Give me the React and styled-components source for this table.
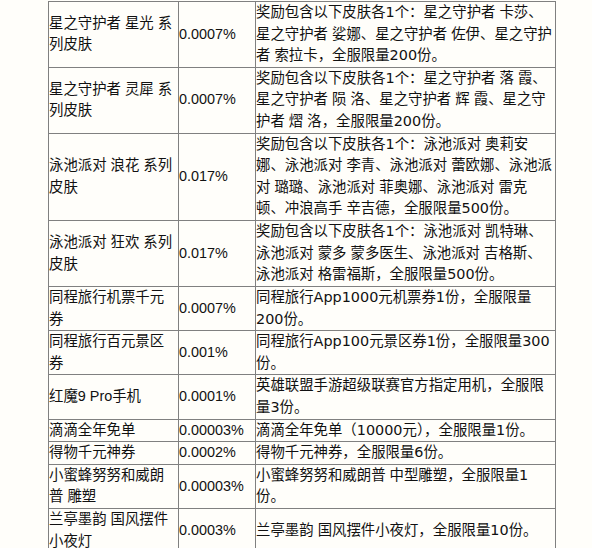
import React from "react";
import styled, { createGlobalStyle } from "styled-components";

const GlobalStyle = createGlobalStyle`
  html, body {
    margin: 0;
    padding: 0;
    background: #fffefa;
  }
  body {
    font-family: "Liberation Sans", "Noto Sans CJK SC", sans-serif;
    color: #111;
  }
`;

const Page = styled.div`
  padding: 1px 0 0 48px;
  width: 592px;
  height: 548px;
  box-sizing: border-box;
  overflow: hidden;
`;

const Table = styled.table`
  border-collapse: collapse;
  width: 504px;
  table-layout: fixed;
  font-size: 14.4px;
  line-height: 1.5;
`;

const Cell = styled.td`
  border: 1px solid #808080;
  padding: 0;
  vertical-align: middle;
  width: ${(p) => p.$w}px;
`;

const DescCell = styled(Cell)`
  font-family: "DejaVu Sans", "Noto Sans CJK SC", sans-serif;
  word-spacing: -0.5px;
`;

const rewards = [
  {
    name: "星之守护者 星光 系列皮肤",
    rate: "0.0007%",
    desc: "奖励包含以下皮肤各1个：星之守护者 卡莎、星之守护者 娑娜、星之守护者 佐伊、星之守护者 索拉卡，全服限量200份。",
  },
  {
    name: "星之守护者 灵犀 系列皮肤",
    rate: "0.0007%",
    desc: "奖励包含以下皮肤各1个：星之守护者 落 霞、星之守护者 陨 洛、星之守护者 辉 霞、星之守护者 熠 洛，全服限量200份。",
  },
  {
    name: "泳池派对 浪花 系列皮肤",
    rate: "0.017%",
    desc: "奖励包含以下皮肤各1个：泳池派对 奥莉安娜、泳池派对 李青、泳池派对 蕾欧娜、泳池派对 璐璐、泳池派对 菲奥娜、泳池派对 雷克顿、冲浪高手 辛吉德，全服限量500份。",
  },
  {
    name: "泳池派对 狂欢 系列皮肤",
    rate: "0.017%",
    desc: "奖励包含以下皮肤各1个：泳池派对 凯特琳、泳池派对 蒙多 蒙多医生、泳池派对 吉格斯、泳池派对 格雷福斯，全服限量500份。",
  },
  {
    name: "同程旅行机票千元券",
    rate: "0.0007%",
    desc: "同程旅行App1000元机票券1份，全服限量200份。",
  },
  {
    name: "同程旅行百元景区券",
    rate: "0.001%",
    desc: "同程旅行App100元景区券1份，全服限量300份。",
  },
  {
    name: "红魔9 Pro手机",
    rate: "0.0001%",
    desc: "英雄联盟手游超级联赛官方指定用机，全服限量3份。",
  },
  {
    name: "滴滴全年免单",
    rate: "0.00003%",
    desc: "滴滴全年免单（10000元），全服限量1份。",
  },
  {
    name: "得物千元神券",
    rate: "0.0002%",
    desc: "得物千元神券，全服限量6份。",
  },
  {
    name: "小蜜蜂努努和威朗普 雕塑",
    rate: "0.00003%",
    desc: "小蜜蜂努努和威朗普 中型雕塑，全服限量1份。",
  },
  {
    name: "兰亭墨韵 国风摆件小夜灯",
    rate: "0.0003%",
    desc: "兰亭墨韵 国风摆件小夜灯，全服限量10份。",
  },
];

export default function App() {
  return (
    <>
      <GlobalStyle />
      <Page>
        <Table>
          <tbody>
            {rewards.map((r) => (
              <tr key={r.name}>
                <Cell $w={129}>{r.name}</Cell>
                <Cell $w={76}>{r.rate}</Cell>
                <DescCell $w={299}>{r.desc}</DescCell>
              </tr>
            ))}
          </tbody>
        </Table>
      </Page>
    </>
  );
}
